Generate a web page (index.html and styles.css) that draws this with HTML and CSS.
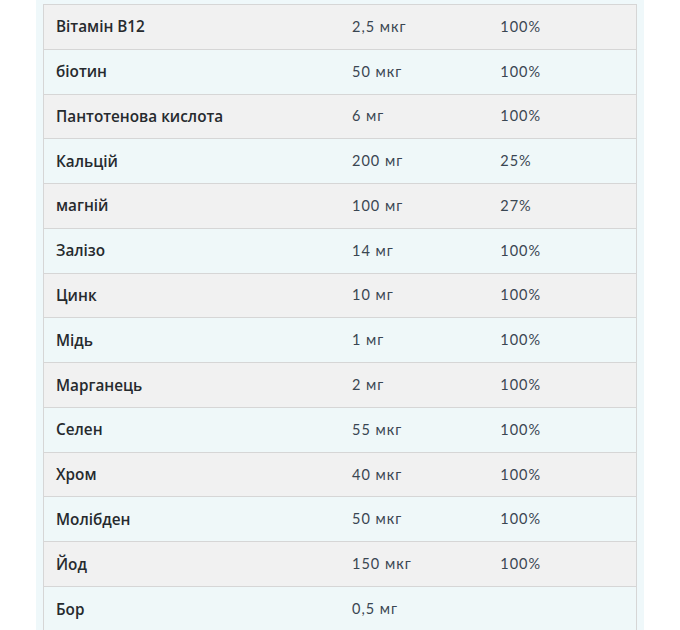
FILE: index.html
```html
<!DOCTYPE html>
<html lang="uk">
<head>
<meta charset="utf-8">
<link rel="stylesheet" href="styles.css">
</head>
<body>
<div class="wrap">
  <table class="facts">
    <tbody>
      <tr class="odd"><td class="name">Вітамін B12</td><td>2,5 мкг</td><td>100%</td></tr>
      <tr class="even"><td class="name">біотин</td><td>50 мкг</td><td>100%</td></tr>
      <tr class="odd"><td class="name">Пантотенова кислота</td><td>6 мг</td><td>100%</td></tr>
      <tr class="even"><td class="name">Кальцій</td><td>200 мг</td><td>25%</td></tr>
      <tr class="odd"><td class="name">магній</td><td>100 мг</td><td>27%</td></tr>
      <tr class="even"><td class="name">Залізо</td><td>14 мг</td><td>100%</td></tr>
      <tr class="odd"><td class="name">Цинк</td><td>10 мг</td><td>100%</td></tr>
      <tr class="even"><td class="name">Мідь</td><td>1 мг</td><td>100%</td></tr>
      <tr class="odd"><td class="name">Марганець</td><td>2 мг</td><td>100%</td></tr>
      <tr class="even"><td class="name">Селен</td><td>55 мкг</td><td>100%</td></tr>
      <tr class="odd"><td class="name">Хром</td><td>40 мкг</td><td>100%</td></tr>
      <tr class="even"><td class="name">Молібден</td><td>50 мкг</td><td>100%</td></tr>
      <tr class="odd"><td class="name">Йод</td><td>150 мкг</td><td>100%</td></tr>
      <tr class="even"><td class="name">Бор</td><td>0,5 мг</td><td></td></tr>
    </tbody>
  </table>
</div>
</body>
</html>
```
FILE: styles.css
```css
html, body {
  margin: 0;
  padding: 0;
  background: #ffffff;
}
body {
  height: 630px;
  overflow: hidden;
}
.wrap {
  margin: 0 36px;
  width: 608px;
  background: #eff8fa;
  padding: 4px 7px 0 7px;
  box-sizing: border-box;
  height: 640px;
}
.facts {
  width: 594px;
  border-collapse: collapse;
  table-layout: fixed;
  border-left: 1px solid #d6d6d6;
  border-right: 1px solid #d6d6d6;
}
.facts td {
  height: 44.77px;
  padding: 0 12px 1px 12px;
  box-sizing: border-box;
  border-top: 1px solid #d6d6d6;
  font-family: "Lato", "Liberation Sans", sans-serif;
  font-size: 14.5px;
  letter-spacing: 1px;
  color: #3a4652;
  vertical-align: middle;
}
.facts td:nth-child(1) { width: 50%; }
.facts td:nth-child(2) { width: 25%; }
.facts td:nth-child(3) { width: 25%; }
.facts td.name {
  font-family: "Open Sans", "Liberation Sans", sans-serif;
  font-weight: 600;
  font-size: 15.3px;
  letter-spacing: 0;
  color: #262a2e;
}
.odd td { background: #f1f1f1; }
.even td { background: #eff8f9; }
```
